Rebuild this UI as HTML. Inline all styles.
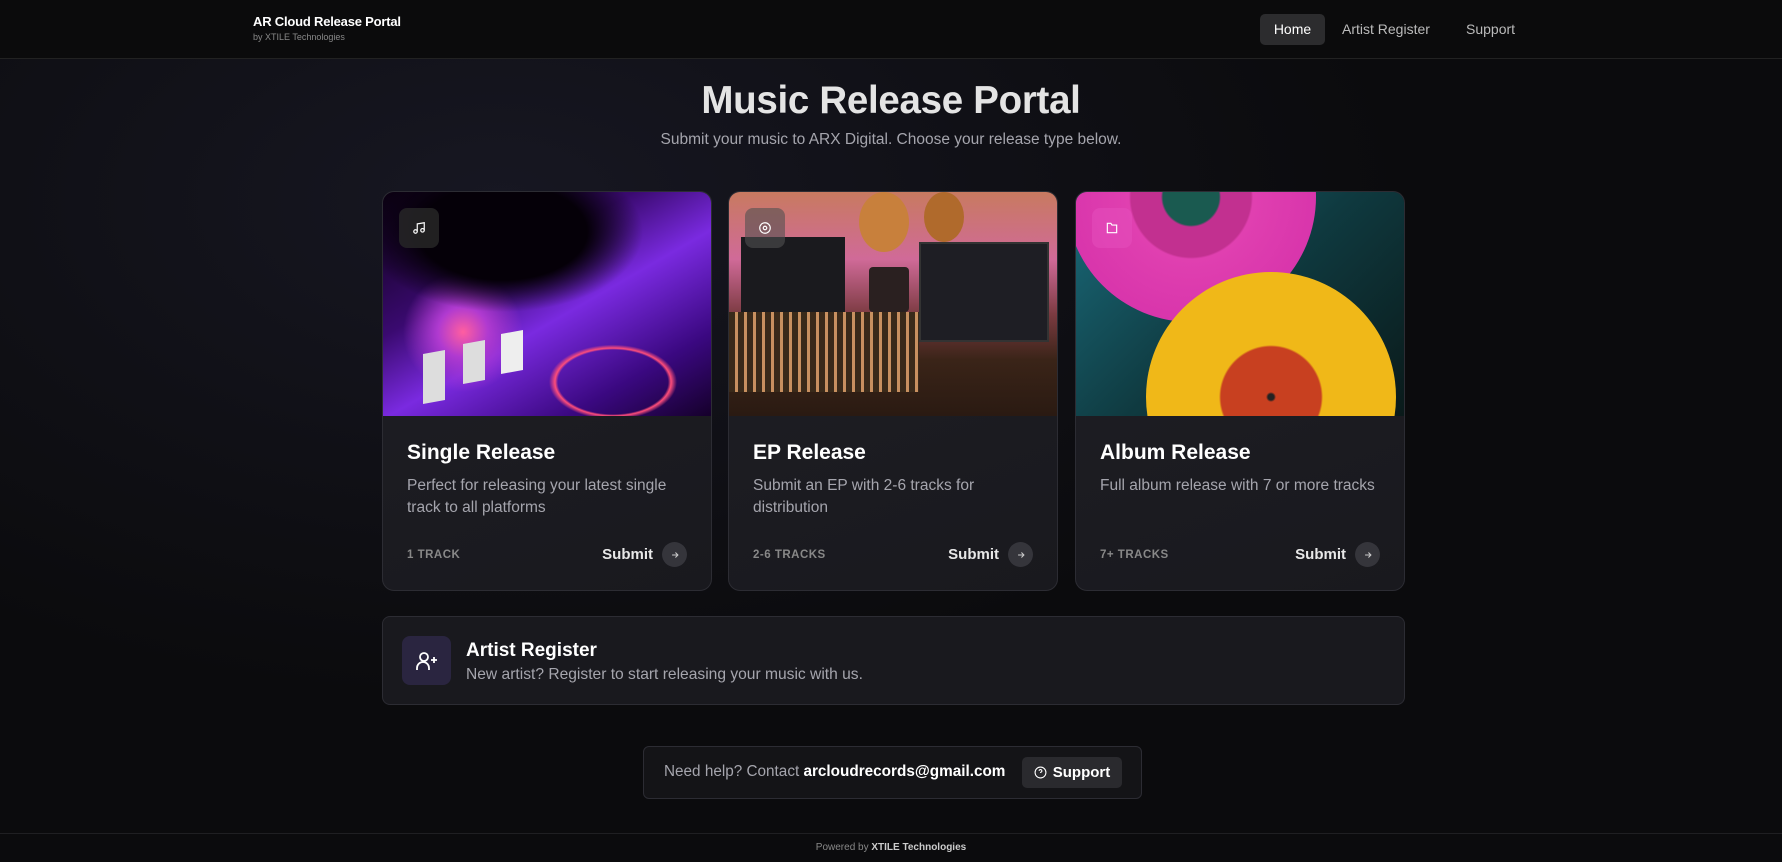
<!DOCTYPE html>
<html><head><meta charset="utf-8"><style>
*{box-sizing:border-box;margin:0;padding:0}
body{width:1782px;height:862px;overflow:hidden;font-family:"Liberation Sans",sans-serif;color:#fff;
background:radial-gradient(ellipse 900px 500px at 500px 200px,#171722 0%,#101016 55%,#0b0b0d 100%);position:relative}
.nav{position:absolute;left:0;top:0;width:1782px;height:59px;background:#0b0b0c;border-bottom:1px solid #222}
.brand{position:absolute;left:253px;top:14px}
.brand b{font-size:13px;display:block;letter-spacing:-.2px}
.brand span{font-size:9px;color:#888;display:block;margin-top:3px}
.home{position:absolute;left:1260px;top:14px;width:65px;height:31px;background:#2c2c2e;border-radius:5px;font-size:14px;text-align:center;line-height:31px}
.nl{position:absolute;top:14px;line-height:31px;font-size:14px;color:#bbb}
h1{position:absolute;left:0;width:1782px;text-align:center;top:79px;font-size:38.5px;color:#e4e4e4;letter-spacing:-.3px}
.sub{position:absolute;left:0;width:1782px;text-align:center;top:131px;font-size:15.5px;color:#a5a5ad}
.card{position:absolute;top:191px;width:330px;height:400px;border:1px solid #2c2c33;border-radius:12px;background:linear-gradient(160deg,#1f1f25,#19191e);overflow:hidden}
.img{position:absolute;left:0;top:0;width:100%;height:224px;overflow:hidden}
.ib{position:absolute;left:16px;top:16px;width:40px;height:40px;border-radius:8px;background:rgba(40,40,40,.8);display:flex;align-items:center;justify-content:center}
.ct{position:absolute;left:24px;top:249px;font-size:21px;font-weight:bold}
.cd{position:absolute;left:24px;top:283px;width:272px;font-size:15.5px;line-height:22px;color:#a5a5ad}
.tr{position:absolute;left:24px;top:357px;font-size:11.5px;color:#888;font-weight:bold;letter-spacing:.5px}
.sb{position:absolute;right:24px;top:350px;display:flex;align-items:center;font-size:15px;font-weight:bold;color:#e8e8e8}
.ar{width:25px;height:25px;border-radius:50%;background:#35353b;margin-left:9px;display:flex;align-items:center;justify-content:center}
.reg{position:absolute;left:382px;top:616px;width:1023px;height:89px;border:1px solid #2c2c33;border-radius:8px;background:#19191e}
.ri{position:absolute;left:19px;top:19px;width:49px;height:49px;border-radius:8px;background:#2a2540;display:flex;align-items:center;justify-content:center}
.help{position:absolute;left:643px;top:746px;width:499px;height:53px;border:1px solid #2c2c33;border-radius:6px;background:#141417}
.foot{position:absolute;left:0;top:833px;width:1782px;height:29px;border-top:1px solid #1f1f22;text-align:center;font-size:10px;color:#888;line-height:28px}
</style></head><body>
<div class="nav">
 <div class="brand"><b>AR Cloud Release Portal</b><span>by XTILE Technologies</span></div>
 <div class="home">Home</div>
 <div class="nl" style="left:1342px">Artist Register</div>
 <div class="nl" style="left:1466px">Support</div>
</div>
<h1>Music Release Portal</h1>
<div class="sub">Submit your music to ARX Digital. Choose your release type below.</div>

<div class="card" style="left:382px">
 <div class="img" style="background:radial-gradient(ellipse 140px 80px at 120px 40px,#050008 0,#050008 60%,transparent 100%),radial-gradient(circle at 80px 140px,#ff5ea0 0,#b03ad0 25px,transparent 60px),radial-gradient(ellipse 120px 70px at 230px 190px,transparent 55px,#ff4d7a 58px,transparent 64px),linear-gradient(150deg,#0a0010 0%,#3a0a70 35%,#7a2ae0 55%,#3a0880 80%,#15002a 100%)">
  <div style="position:absolute;left:40px;top:160px;width:22px;height:50px;background:#ddd;transform:skewY(-10deg)"></div>
  <div style="position:absolute;left:80px;top:150px;width:22px;height:40px;background:#ddd;transform:skewY(-10deg)"></div>
  <div style="position:absolute;left:118px;top:140px;width:22px;height:40px;background:#eee;transform:skewY(-10deg)"></div>
  <div class="ib"><svg width="14" height="14" viewBox="0 0 24 24" fill="none" stroke="#fff" stroke-width="2"><path d="M9 18V5l12-2v13"/><circle cx="6" cy="18" r="3"/><circle cx="18" cy="16" r="3"/></svg></div>
 </div>
 <div class="ct">Single Release</div>
 <div class="cd">Perfect for releasing your latest single track to all platforms</div>
 <div class="tr">1 TRACK</div>
 <div class="sb">Submit<div class="ar"><svg width="10" height="10" viewBox="0 0 24 24" fill="none" stroke="#ccc" stroke-width="2.5"><path d="M5 12h14M13 6l6 6-6 6"/></svg></div></div>
</div>

<div class="card" style="left:728px">
 <div class="img" style="background:linear-gradient(180deg,#c87a60 0%,#d06a98 30%,#7a3a40 55%,#3a2418 75%,#2a1a12 100%)">
  <div style="position:absolute;left:130px;top:0;width:50px;height:60px;border-radius:50%;background:#c8803c"></div>
  <div style="position:absolute;left:195px;top:0;width:40px;height:50px;border-radius:50%;background:#b06a2c"></div>
  <div style="position:absolute;left:12px;top:45px;width:104px;height:80px;background:#1a1a1e"></div>
  <div style="position:absolute;left:190px;top:50px;width:130px;height:100px;background:#1e1e24;border:2px solid #333"></div>
  <div style="position:absolute;left:140px;top:75px;width:40px;height:45px;background:#2a2020;border-radius:4px"></div>
  <div style="position:absolute;left:0;top:120px;width:190px;height:80px;background:repeating-linear-gradient(90deg,#3a2a1a 0 6px,#c89060 6px 9px)"></div>
  <div class="ib" style="background:rgba(80,80,80,.6)"><svg width="14" height="14" viewBox="0 0 24 24" fill="none" stroke="#fff" stroke-width="2"><circle cx="12" cy="12" r="9"/><circle cx="12" cy="12" r="3"/></svg></div>
 </div>
 <div class="ct">EP Release</div>
 <div class="cd" style="width:262px">Submit an EP with 2-6 tracks for distribution</div>
 <div class="tr">2-6 TRACKS</div>
 <div class="sb">Submit<div class="ar"><svg width="10" height="10" viewBox="0 0 24 24" fill="none" stroke="#ccc" stroke-width="2.5"><path d="M5 12h14M13 6l6 6-6 6"/></svg></div></div>
</div>

<div class="card" style="left:1075px">
 <div class="img" style="background:linear-gradient(135deg,#1a6a7a 0%,#0f3a40 50%,#0a1a1a 100%)">
  <div style="position:absolute;left:-10px;top:-120px;width:250px;height:250px;border-radius:50%;background:radial-gradient(circle,#1a5a50 0 28px,#c23090 30px 60px,#e040b0 62px,#d22ca8 100%)"></div>
  <div style="position:absolute;left:70px;top:80px;width:250px;height:250px;border-radius:50%;background:radial-gradient(circle,#222 0 3px,#c84020 5px 50px,#f0b818 52px)"></div>
  <div class="ib" style="background:rgba(230,80,190,.5)"><svg width="14" height="14" viewBox="0 0 24 24" fill="none" stroke="#fff" stroke-width="2"><path d="M4 4h6l2 3h8v13H4z"/></svg></div>
 </div>
 <div class="ct">Album Release</div>
 <div class="cd" style="width:290px">Full album release with 7 or more tracks</div>
 <div class="tr">7+ TRACKS</div>
 <div class="sb">Submit<div class="ar"><svg width="10" height="10" viewBox="0 0 24 24" fill="none" stroke="#ccc" stroke-width="2.5"><path d="M5 12h14M13 6l6 6-6 6"/></svg></div></div>
</div>

<div class="reg">
 <div class="ri"><svg width="24" height="24" viewBox="0 0 24 24" fill="none" stroke="#fff" stroke-width="1.8"><circle cx="9" cy="8" r="4"/><path d="M2 21v-2a6 6 0 0 1 12 0v2M19 8v6M16 11h6"/></svg></div>
 <div style="position:absolute;left:83px;top:23px;font-size:19px;font-weight:bold">Artist Register</div>
 <div style="position:absolute;left:83px;top:49px;font-size:15.6px;color:#a5a5ad">New artist? Register to start releasing your music with us.</div>
</div>

<div class="help">
 <div style="position:absolute;left:20px;top:16px;font-size:15.3px;color:#a5a5ad">Need help? Contact <b style="color:#fff">arcloudrecords@gmail.com</b></div>
 <div style="position:absolute;left:378px;top:10px;width:100px;height:31px;background:#2a2a2e;border-radius:5px;display:flex;align-items:center;justify-content:center;font-size:15px;font-weight:bold"><svg width="13" height="13" viewBox="0 0 24 24" fill="none" stroke="#fff" stroke-width="2" style="margin-right:6px"><circle cx="12" cy="12" r="10"/><path d="M9.5 9a2.5 2.5 0 1 1 3.5 2.3c-.7.4-1 .9-1 1.7M12 17h.01"/></svg>Support</div>
</div>

<div class="foot">Powered by <b style="color:#ccc">XTILE Technologies</b></div>
</body></html>
